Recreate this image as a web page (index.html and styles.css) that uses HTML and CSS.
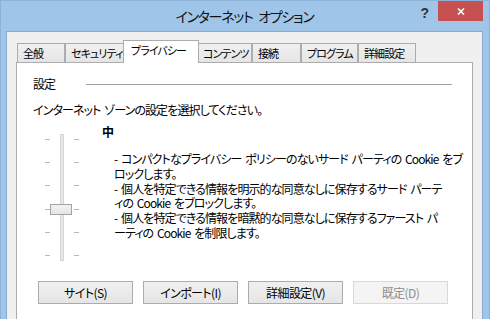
FILE: index.html
```html
<!DOCTYPE html>
<html lang="ja">

<head>
  <meta charset="UTF-8">
  <title>インターネット オプション</title>
  <link rel="stylesheet" href="styles.css">
</head>

<body>
  <div class="window">
    <div class="titlebar">
      <span></span>
      <span class="title">インターネット オプション</span>
      <div class="caption-buttons">
        <span class="help">?</span>
        <span class="close">
          <svg width="8" height="7" viewBox="0 0 8 7">
            <path d="M1 0.5 L7 6.5 M7 0.5 L1 6.5" stroke="#fff" stroke-width="1.6" fill="none"/>
          </svg>
        </span>
      </div>
    </div>

    <div class="client">
      <div class="tabs">
        <div class="tab">全般</div>
        <div class="tab">セキュリティ</div>
        <div class="tab active">プライバシー</div>
        <div class="tab">コンテンツ</div>
        <div class="tab">接続</div>
        <div class="tab">プログラム</div>
        <div class="tab">詳細設定</div>
      </div>

      <div class="panel">
        <div class="section-head">
          <span class="section-label">設定</span>
          <div class="rule"></div>
        </div>

        <p class="intro">インターネット ゾーンの設定を選択してください。</p>

        <div class="level">
          <div class="slider">
            <div class="ticks"><i></i><i></i><i></i><i></i><i></i><i></i></div>
            <div class="track"></div>
            <div class="ticks"><i></i><i></i><i></i><i></i><i></i><i></i></div>
            <div class="thumb"></div>
          </div>

          <div class="level-info">
            <div class="level-name">中</div>
            <p class="level-desc">
              - コンパクトなプライバシー ポリシーのないサード パーティの Cookie をブ<br>
              ロックします。<br>
              - 個人を特定できる情報を明示的な同意なしに保存するサード パーテ<br>
              ィの Cookie をブロックします。<br>
              - 個人を特定できる情報を暗黙的な同意なしに保存するファースト パ<br>
              ーティの Cookie を制限します。
            </p>
          </div>
        </div>

        <div class="buttons">
          <button class="btn">サイト(S)</button>
          <button class="btn">インポート(I)</button>
          <button class="btn">詳細設定(V)</button>
          <button class="btn" disabled>既定(D)</button>
        </div>
      </div>
    </div>
  </div>
</body>

</html>
```

FILE: styles.css
```css
/* Windows 8 風のダイアログ */
body {
  margin: 0;
  padding: 0;
  font-family: "Noto Sans CJK JP", "Noto Sans", sans-serif;
  font-feature-settings: "palt";
  letter-spacing: -0.9px;
  word-spacing: 2px;
  color: #000;
  overflow: hidden;
}

.window {
  width: 490px;
  height: 319px;
  box-sizing: border-box;
  background-color: #9fc6e9;
  border: 1px solid #8db2da;
  border-bottom: none;
  padding: 0 6px 0 5px;
  overflow: hidden;
}

.titlebar {
  display: grid;
  grid-template-columns: 1fr auto 1fr;
  align-items: start;
  height: 30px;
}

.title {
  font-size: 14px;
  line-height: 30px;
  letter-spacing: -1.3px;
  word-spacing: 4px;
  color: #111;
}

.caption-buttons {
  display: flex;
  justify-content: flex-end;
  align-items: flex-start;
}

.help {
  font-family: "Liberation Sans", Arial, sans-serif;
  font-weight: bold;
  font-size: 14px;
  line-height: 20px;
  letter-spacing: 0;
  color: #333;
  margin-right: 9px;
  margin-top: 2px;
}

.close {
  width: 45px;
  height: 20px;
  background-color: #c75050;
  display: flex;
  justify-content: center;
  align-items: center;
}

.client {
  background-color: #f0f0f0;
  border: 1px solid #8aa9cc;
  border-bottom: none;
  height: 300px;
}

/* タブ */
.tabs {
  display: flex;
  align-items: flex-end;
  height: 21px;
  padding-top: 9px;
  margin-left: 10px;
}

.tab {
  box-sizing: border-box;
  height: 19px;
  border: 1px solid #acacac;
  border-bottom: none;
  background: linear-gradient(#f0f0f0, #e5e5e5);
  font-size: 11px;
  line-height: 18px;
  letter-spacing: -0.9px;
  padding-left: 5px;
  white-space: nowrap;
  overflow: hidden;
}

.tab:nth-child(1) { width: 48px; }
.tab:nth-child(2) { width: 60px; }
.tab:nth-child(4) { width: 55px; }
.tab:nth-child(5) { width: 49px; }
.tab:nth-child(6) { width: 57px; }
.tab:nth-child(7) { width: 58px; }

.tab.active {
  width: 76px;
  height: 23px;
  margin: 0 -2px -1px;
  background: #fff;
  position: relative;
  z-index: 1;
  line-height: 19px;
  padding-left: 7px;
}

/* パネル */
.panel {
  box-sizing: border-box;
  width: 457px;
  height: 280px;
  margin-left: 9px;
  background-color: #fff;
  border: 1px solid #acacac;
  padding-top: 13px;
}

.section-head {
  display: flex;
  align-items: center;
  height: 16px;
  padding-left: 16px;
  padding-right: 20px;
}

.section-label {
  width: 53px;
  font-size: 12px;
  line-height: 16px;
}

.rule {
  flex: 1;
  height: 1px;
  background-color: #a0a0a0;
  margin-top: 1px;
}

.intro {
  margin: 10px 0 0 16px;
  font-size: 12px;
  line-height: 16px;
  white-space: nowrap;
}

.level {
  display: flex;
  margin-top: 6px;
}

/* スライダー */
.slider {
  display: flex;
  margin-left: 28px;
  margin-top: 10px;
  height: 127px;
  position: relative;
}

.ticks {
  display: flex;
  flex-direction: column;
  justify-content: space-between;
  padding: 5px 0;
  box-sizing: border-box;
  height: 127px;
  width: 5px;
}

.ticks i {
  display: block;
  height: 1px;
  width: 5px;
  background-color: #b8b8b8;
}

.track {
  box-sizing: border-box;
  width: 4px;
  height: 127px;
  margin: 0 10px;
  background-color: #e7e7e7;
  border: 1px solid #d6d6d6;
}

.thumb {
  position: absolute;
  left: 5px;
  top: 70px;
  box-sizing: border-box;
  width: 22px;
  height: 11px;
  border: 1px solid #a3a3a3;
  background: linear-gradient(#f2f2f2, #e5e5e5);
}

.level-info {
  margin-left: 23px;
}

.level-name {
  font-size: 12px;
  font-weight: bold;
  line-height: 16px;
}

.level-desc {
  margin: 12px 0 0 12px;
  font-size: 12px;
  line-height: 14.8px;
  white-space: nowrap;
}

/* ボタン */
.buttons {
  display: flex;
  gap: 10px;
  margin-top: 20px;
  margin-left: 21px;
}

.btn {
  width: 95px;
  height: 23px;
  padding: 0;
  font-family: "Noto Sans CJK JP", "Noto Sans", sans-serif;
  font-feature-settings: "palt";
  font-size: 12px;
  letter-spacing: -0.6px;
  color: #000;
  background: linear-gradient(#f0f0f0, #e5e5e5);
  border: 1px solid #acacac;
  border-radius: 0;
}

.btn:disabled {
  color: #8d8d8d;
  background: #f4f4f4;
  border-color: #d9d9d9;
}
```
